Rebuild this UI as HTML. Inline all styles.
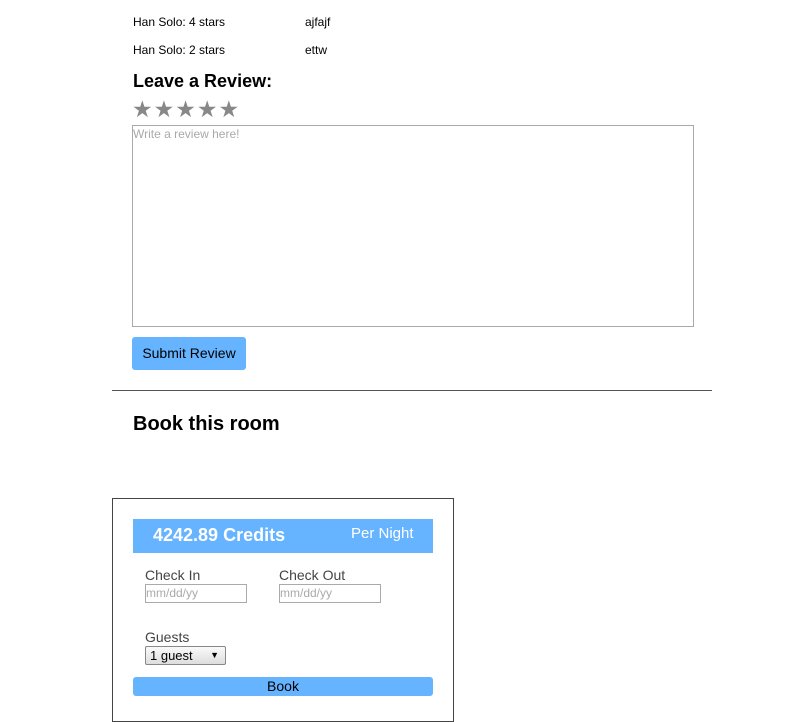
<!DOCTYPE html>
<html><head><style>
body{margin:0;width:795px;height:722px;position:relative;background:#fff;font-family:"Liberation Sans",sans-serif;color:#000;overflow:hidden}
.a{position:absolute;white-space:nowrap}
</style></head><body>
<div class="a" style="left:133px;top:15px;font-size:12px">Han Solo: 4 stars</div>
<div class="a" style="left:305px;top:15px;font-size:12px">ajfajf</div>
<div class="a" style="left:133px;top:43px;font-size:12px">Han Solo: 2 stars</div>
<div class="a" style="left:305px;top:43px;font-size:12px">ettw</div>
<div class="a" style="left:133px;top:71px;font-size:18px;font-weight:bold">Leave a Review:</div>
<div class="a" style="left:132px;top:96px;font-size:23px;color:#888;letter-spacing:1px">★★★★★</div>
<div class="a" style="left:132px;top:125px;width:560px;height:200px;border:1px solid #a9a9a9;"></div>
<div class="a" style="left:133px;top:127px;font-size:12px;color:#a9a9a9">Write a review here!</div>
<div class="a" style="left:132px;top:337px;width:114px;height:33px;background:#66b3ff;border-radius:3px;font-size:14px;line-height:33px;text-align:center">Submit Review</div>
<div class="a" style="left:112px;top:390px;width:600px;height:1px;background:#555"></div>
<div class="a" style="left:133px;top:413px;font-size:20px;font-weight:bold">Book this room</div>
<div class="a" style="left:112px;top:498px;width:340px;height:222px;border:1px solid #444"></div>
<div class="a" style="left:133px;top:519px;width:300px;height:34px;background:#66b3ff"></div>
<div class="a" style="left:153px;top:525px;font-size:18px;font-weight:bold;color:#fff">4242.89 Credits</div>
<div class="a" style="left:351px;top:525px;font-size:15px;color:#fff">Per Night</div>
<div class="a" style="left:145px;top:567px;font-size:14px;color:#444">Check In</div>
<div class="a" style="left:279px;top:567px;font-size:14px;color:#444">Check Out</div>
<div class="a" style="left:145px;top:584px;width:100px;height:17px;border:1px solid #aaa;font-size:12px;color:#aaa;line-height:17px">mm/dd/yy</div>
<div class="a" style="left:279px;top:584px;width:100px;height:17px;border:1px solid #aaa;font-size:12px;color:#aaa;line-height:17px">mm/dd/yy</div>
<div class="a" style="left:145px;top:629px;font-size:14px;color:#444">Guests</div>
<div class="a" style="left:145px;top:646px;border:1px solid #888;border-radius:2px;background:linear-gradient(#fafafa,#ddd);font-size:13px;line-height:17px;padding-left:4px;box-sizing:border-box;width:81px;height:19px">1 guest<span style="position:absolute;right:6px;font-size:9px">▼</span></div>
<div class="a" style="left:133px;top:677px;width:300px;height:19px;background:#66b3ff;border-radius:3px;font-size:14px;line-height:19px;text-align:center">Book</div>
</body></html>
